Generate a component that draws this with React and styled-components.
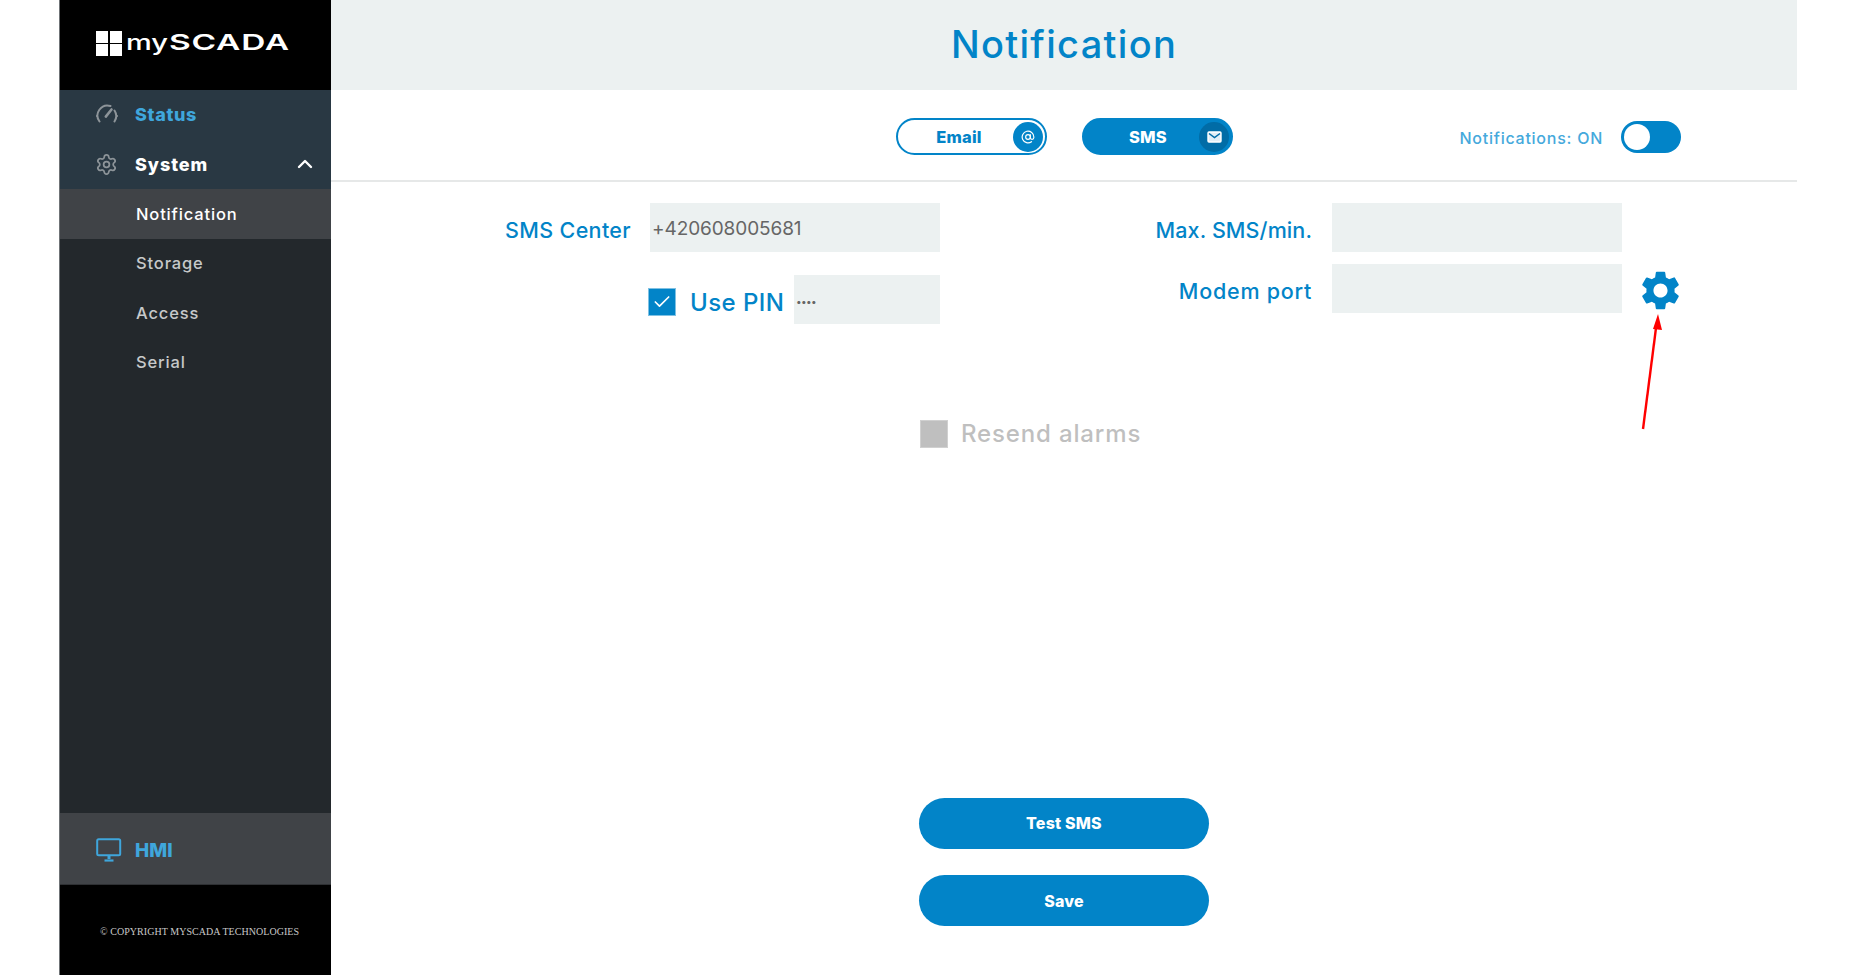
import React from 'react';
import styled, { createGlobalStyle } from 'styled-components';
import { Settings, ChevronUp, AtSign, Check } from 'lucide-react';
import { MdSettings } from 'react-icons/md';

const GlobalStyle = createGlobalStyle`
    html, body {
        margin: 0;
        padding: 0;
        background: #fff;
    }
    body {
        font-family: "Inter", "Noto Sans", sans-serif;
    }
    * {
        box-sizing: border-box;
    }
`;

const Page = styled.div`
    display: flex;
    height: 975px;
    width: 1853px;
    padding-left: 59px;
    overflow: hidden;
`;

const Sidebar = styled.aside`
    width: 272px;
    height: 100%;
    display: flex;
    flex-direction: column;
    background: #23282c;
    border-left: 1px solid #6f7376;
    flex-shrink: 0;
`;

const Brand = styled.div`
    height: 90px;
    background: #000;
    display: flex;
    align-items: center;
    padding: 0 0 3px 36px;
    gap: 4px;
    color: #fff;
`;

const BrandMark = styled.div`
    display: grid;
    grid-template-columns: 12px 12px;
    grid-template-rows: 12px 12px;
    gap: 1.5px;
`;

const BrandCell = styled.span`
    background: #fff;
`;

const BrandText = styled.div`
    font-size: 22px;
    font-weight: 500;
    display: flex;
    align-items: baseline;
    line-height: 1;
    padding-bottom: 3px;
`;

const BrandMy = styled.span`
    display: inline-block;
    margin-right: 12px;
    transform: scaleX(1.32);
    transform-origin: left center;
`;

const BrandName = styled.span`
    display: inline-block;
    font-weight: 600;
    letter-spacing: 0.5px;
    transform: scaleX(1.52);
    transform-origin: left center;
`;

const MainGroup = styled.div`
    background: #293843;
    height: 99px;
`;

const NavRow = styled.div`
    height: 50px;
    display: flex;
    align-items: center;
    padding: 0 14px 2px 35px;
    font-size: 18px;
    font-weight: 800;
    letter-spacing: ${(p) => (p.$accent ? 0.65 : 0.95)}px;
    color: ${(p) => (p.$accent ? '#3fa6dc' : '#fff')};
`;

const NavIcon = styled.span`
    width: 40px;
    display: flex;
    align-items: center;
    color: #8d9499;
    flex-shrink: 0;
`;

const NavChevron = styled.span`
    margin-left: auto;
    display: flex;
    color: #fff;
`;

const SubRow = styled.div`
    height: 49.5px;
    display: flex;
    align-items: center;
    padding-left: 76px;
    font-size: 16.5px;
    letter-spacing: 0.85px;
    font-weight: 500;
    background: ${(p) => (p.$active ? '#404347' : 'transparent')};
    color: ${(p) => (p.$active ? '#fff' : '#c7c9ca')};
`;

const Spacer = styled.div`
    flex: 1;
`;

const HmiRow = styled.div`
    height: 72px;
    background: #404347;
    display: flex;
    align-items: center;
    padding: 3px 0 0 36px;
    font-size: 19px;
    font-weight: 800;
    color: #3fa6dc;
    border-bottom: 1px solid #2e3033;
`;

const HmiIcon = styled.span`
    width: 39px;
    display: flex;
`;

const Copyright = styled.div`
    height: 90px;
    background: #000;
    color: #c9c9c9;
    display: flex;
    align-items: center;
    padding: 2px 0 0 40px;
    font-family: "Liberation Serif", serif;
    font-size: 10px;
    letter-spacing: 0.05px;
    white-space: nowrap;
`;

const Main = styled.main`
    width: 1466px;
    height: 100%;
    display: flex;
    flex-direction: column;
`;

const TitleBar = styled.header`
    height: 90px;
    background: #ecf1f1;
    display: flex;
    align-items: center;
    justify-content: center;
    padding-bottom: 3px;
`;

const Title = styled.h1`
    margin: 0;
    font-size: 38px;
    font-weight: 500;
    letter-spacing: 1.3px;
    color: #0284c8;
`;

const Toolbar = styled.div`
    height: 92px;
    border-bottom: 2px solid #e6e8e8;
    display: flex;
    align-items: flex-start;
    padding-top: 28px;
    padding-left: 565px;
`;

const Tab = styled.div`
    width: 151px;
    height: 37px;
    border-radius: 19px;
    border: 2px solid #0284c8;
    background: ${(p) => (p.$active ? '#0284c8' : '#fff')};
    color: ${(p) => (p.$active ? '#fff' : '#0284c8')};
    display: flex;
    align-items: center;
    justify-content: space-between;
    padding: 0 2px 0 33px;
    margin-right: 35px;
    font-size: 16.5px;
    font-weight: 800;
`;

const TabLabel = styled.span`
    flex: 1;
    text-align: center;
    padding-right: ${(p) => (p.$active ? 20 : 26)}px;
    letter-spacing: 0.2px;
`;

const TabBadge = styled.span`
    width: 30px;
    height: 30px;
    border-radius: 50%;
    display: flex;
    align-items: center;
    justify-content: center;
    color: #fff;
    background: ${(p) => (p.$active ? '#016ca6' : '#0284c8')};
`;

const Switcher = styled.div`
    margin-left: auto;
    margin-right: 116px;
    display: flex;
    align-items: center;
    gap: 18px;
    margin-top: 3px;
    font-size: 16px;
    font-weight: 500;
    letter-spacing: 0.75px;
    color: #45a9dc;
`;

const SwitcherText = styled.span`
    padding-top: 2px;
`;

const Toggle = styled.div`
    width: 60px;
    height: 32px;
    border-radius: 16px;
    background: #0284c8;
    padding: 3px;
`;

const ToggleKnob = styled.div`
    width: 26px;
    height: 26px;
    border-radius: 50%;
    background: #fff;
`;

const Form = styled.section`
    display: flex;
    padding-top: 21px;
`;

const LeftColumn = styled.div`
    width: 609px;
    display: flex;
    flex-direction: column;
    gap: 23px;
`;

const LeftRow = styled.div`
    display: flex;
    justify-content: flex-end;
    align-items: center;
    height: 49px;
`;

const RightColumn = styled.div`
    width: 739px;
    display: grid;
    grid-template-columns: 1fr 290px 37px;
    grid-auto-rows: 49px;
    column-gap: 20px;
    row-gap: 12px;
    align-items: center;
`;

const FieldLabel = styled.label`
    font-size: 21.5px;
    font-weight: 500;
    letter-spacing: ${(p) => p.$spacing ?? 0.35}px;
    color: #0284c8;
    text-align: right;
    white-space: nowrap;
    padding-top: 4px;
    margin-right: ${(p) => p.$gap || 0}px;
`;

const Input = styled.div`
    width: ${(p) => p.$width || 290}px;
    height: 49px;
    background: #ecf1f1;
    display: flex;
    align-items: center;
    padding-left: 2px;
    padding-top: 2px;
    font-size: ${(p) => p.$size || 19}px;
    color: #666;
    letter-spacing: ${(p) => p.$spacing ?? -0.1}px;
`;

const CheckBox = styled.span`
    width: 28px;
    height: 28px;
    flex-shrink: 0;
    display: flex;
    align-items: center;
    justify-content: center;
    color: #fff;
    background: ${(p) => (p.$disabled ? '#bfbfbf' : '#0284c8')};
    border: 1px solid ${(p) => (p.$disabled ? '#d0d0d0' : '#7fc1e3')};
`;

const PinLabel = styled.div`
    flex: 1;
    display: flex;
    align-items: center;
    justify-content: flex-start;
    margin-left: 317px;
    padding-top: 5px;
    gap: 14px;
    font-size: 24px;
    font-weight: 500;
    letter-spacing: 0.45px;
    color: #0284c8;
`;

const GearCell = styled.div`
    position: relative;
    display: flex;
    color: #0284c8;
    margin-top: 3px;
`;

const RedArrow = styled.svg`
    position: absolute;
    left: -6px;
    top: 39px;
    width: 30px;
    height: 124px;
`;

const ResendRow = styled.div`
    margin: 95px 0 0 589px;
    display: flex;
    align-items: center;
    gap: 13px;
    font-size: 24px;
    font-weight: 500;
    letter-spacing: 0.85px;
    color: #bfbfbf;
`;

const Actions = styled.div`
    margin-top: auto;
    padding-bottom: 49px;
    display: flex;
    flex-direction: column;
    align-items: center;
    gap: 26px;
`;

const ActionButton = styled.button`
    width: 290px;
    height: 51px;
    border: 0;
    border-radius: 26px;
    background: #0284c8;
    color: #fff;
    font-family: inherit;
    font-size: 16px;
    font-weight: 800;
    letter-spacing: 0.2px;
    padding-bottom: ${(p) => (p.$lift ? 2 : 0)}px;
`;

const GaugeIcon = () => (
    <svg width="24" height="24" viewBox="0 0 24 24" fill="none" stroke="currentColor" strokeWidth="2" strokeLinecap="round">
        <path d="M4.5 19.5A10 10 0 0 1 15.5 4" />
        <path d="M19.5 8.5a10 10 0 0 1 0 11" />
        <path d="M2 14h0M22 14h0" />
        <path d="M10.8 14.6 16.5 7.5" strokeWidth="2.6" />
    </svg>
);

const MonitorIcon = () => (
    <svg width="26" height="24" viewBox="0 0 26 24" fill="none" stroke="currentColor">
        <rect x="1.2" y="1.2" width="23" height="16" rx="1.5" strokeWidth="2" />
        <path d="M13 18v3" strokeWidth="3" />
        <path d="M8.5 22.5h9" strokeWidth="2.2" />
    </svg>
);

const MailIcon = () => (
    <svg width="15" height="12" viewBox="0 0 15 12" fill="none">
        <rect x="1" y="1" width="13" height="10" rx="1" fill="#e3eef6" stroke="#fff" strokeWidth="1.4" />
        <path d="M2 2.5 7.5 6.5 13 2.5" stroke="#016ca6" strokeWidth="1.5" />
    </svg>
);

const App = () => {
    return (
        <Page>
            <GlobalStyle />
            <Sidebar>
                <Brand>
                    <BrandMark>
                        <BrandCell />
                        <BrandCell />
                        <BrandCell />
                        <BrandCell />
                    </BrandMark>
                    <BrandText>
                        <BrandMy>my</BrandMy>
                        <BrandName>SCADA</BrandName>
                    </BrandText>
                </Brand>
                <MainGroup>
                    <NavRow $accent>
                        <NavIcon><GaugeIcon /></NavIcon>
                        Status
                    </NavRow>
                    <NavRow>
                        <NavIcon><Settings size={23} strokeWidth={1.8} /></NavIcon>
                        System
                        <NavChevron><ChevronUp size={24} strokeWidth={2.4} /></NavChevron>
                    </NavRow>
                </MainGroup>
                <SubRow $active>Notification</SubRow>
                <SubRow>Storage</SubRow>
                <SubRow>Access</SubRow>
                <SubRow>Serial</SubRow>
                <Spacer />
                <HmiRow>
                    <HmiIcon><MonitorIcon /></HmiIcon>
                    HMI
                </HmiRow>
                <Copyright>© COPYRIGHT MYSCADA TECHNOLOGIES</Copyright>
            </Sidebar>
            <Main>
                <TitleBar>
                    <Title>Notification</Title>
                </TitleBar>
                <Toolbar>
                    <Tab>
                        <TabLabel>Email</TabLabel>
                        <TabBadge><AtSign size={14} strokeWidth={2} /></TabBadge>
                    </Tab>
                    <Tab $active>
                        <TabLabel $active>SMS</TabLabel>
                        <TabBadge $active><MailIcon /></TabBadge>
                    </Tab>
                    <Switcher>
                        <SwitcherText>Notifications: ON</SwitcherText>
                        <Toggle><ToggleKnob /></Toggle>
                    </Switcher>
                </Toolbar>
                <Form>
                    <LeftColumn>
                        <LeftRow>
                            <FieldLabel $gap={19}>SMS Center</FieldLabel>
                            <Input>+420608005681</Input>
                        </LeftRow>
                        <LeftRow>
                            <PinLabel>
                                <CheckBox><Check size={20} strokeWidth={2} /></CheckBox>
                                Use PIN
                            </PinLabel>
                            <Input $width={146} $size={10} $spacing={-0.6}>••••</Input>
                        </LeftRow>
                    </LeftColumn>
                    <RightColumn>
                        <FieldLabel $spacing={0.1}>Max. SMS/min.</FieldLabel>
                        <Input />
                        <span />
                        <FieldLabel $spacing={0.75}>Modem port</FieldLabel>
                        <Input />
                        <GearCell>
                            <MdSettings size={47} style={{ margin: '0 -5px' }} />
                            <RedArrow viewBox="0 0 30 124">
                                <line x1="7" y1="123" x2="20" y2="22" stroke="#ff0000" strokeWidth="2.4" />
                                <polygon points="22,8 26,24 17,23" fill="#ff0000" />
                            </RedArrow>
                        </GearCell>
                    </RightColumn>
                </Form>
                <ResendRow>
                    <CheckBox $disabled />
                    Resend alarms
                </ResendRow>
                <Actions>
                    <ActionButton $lift>Test SMS</ActionButton>
                    <ActionButton>Save</ActionButton>
                </Actions>
            </Main>
        </Page>
    );
};

export default App;
